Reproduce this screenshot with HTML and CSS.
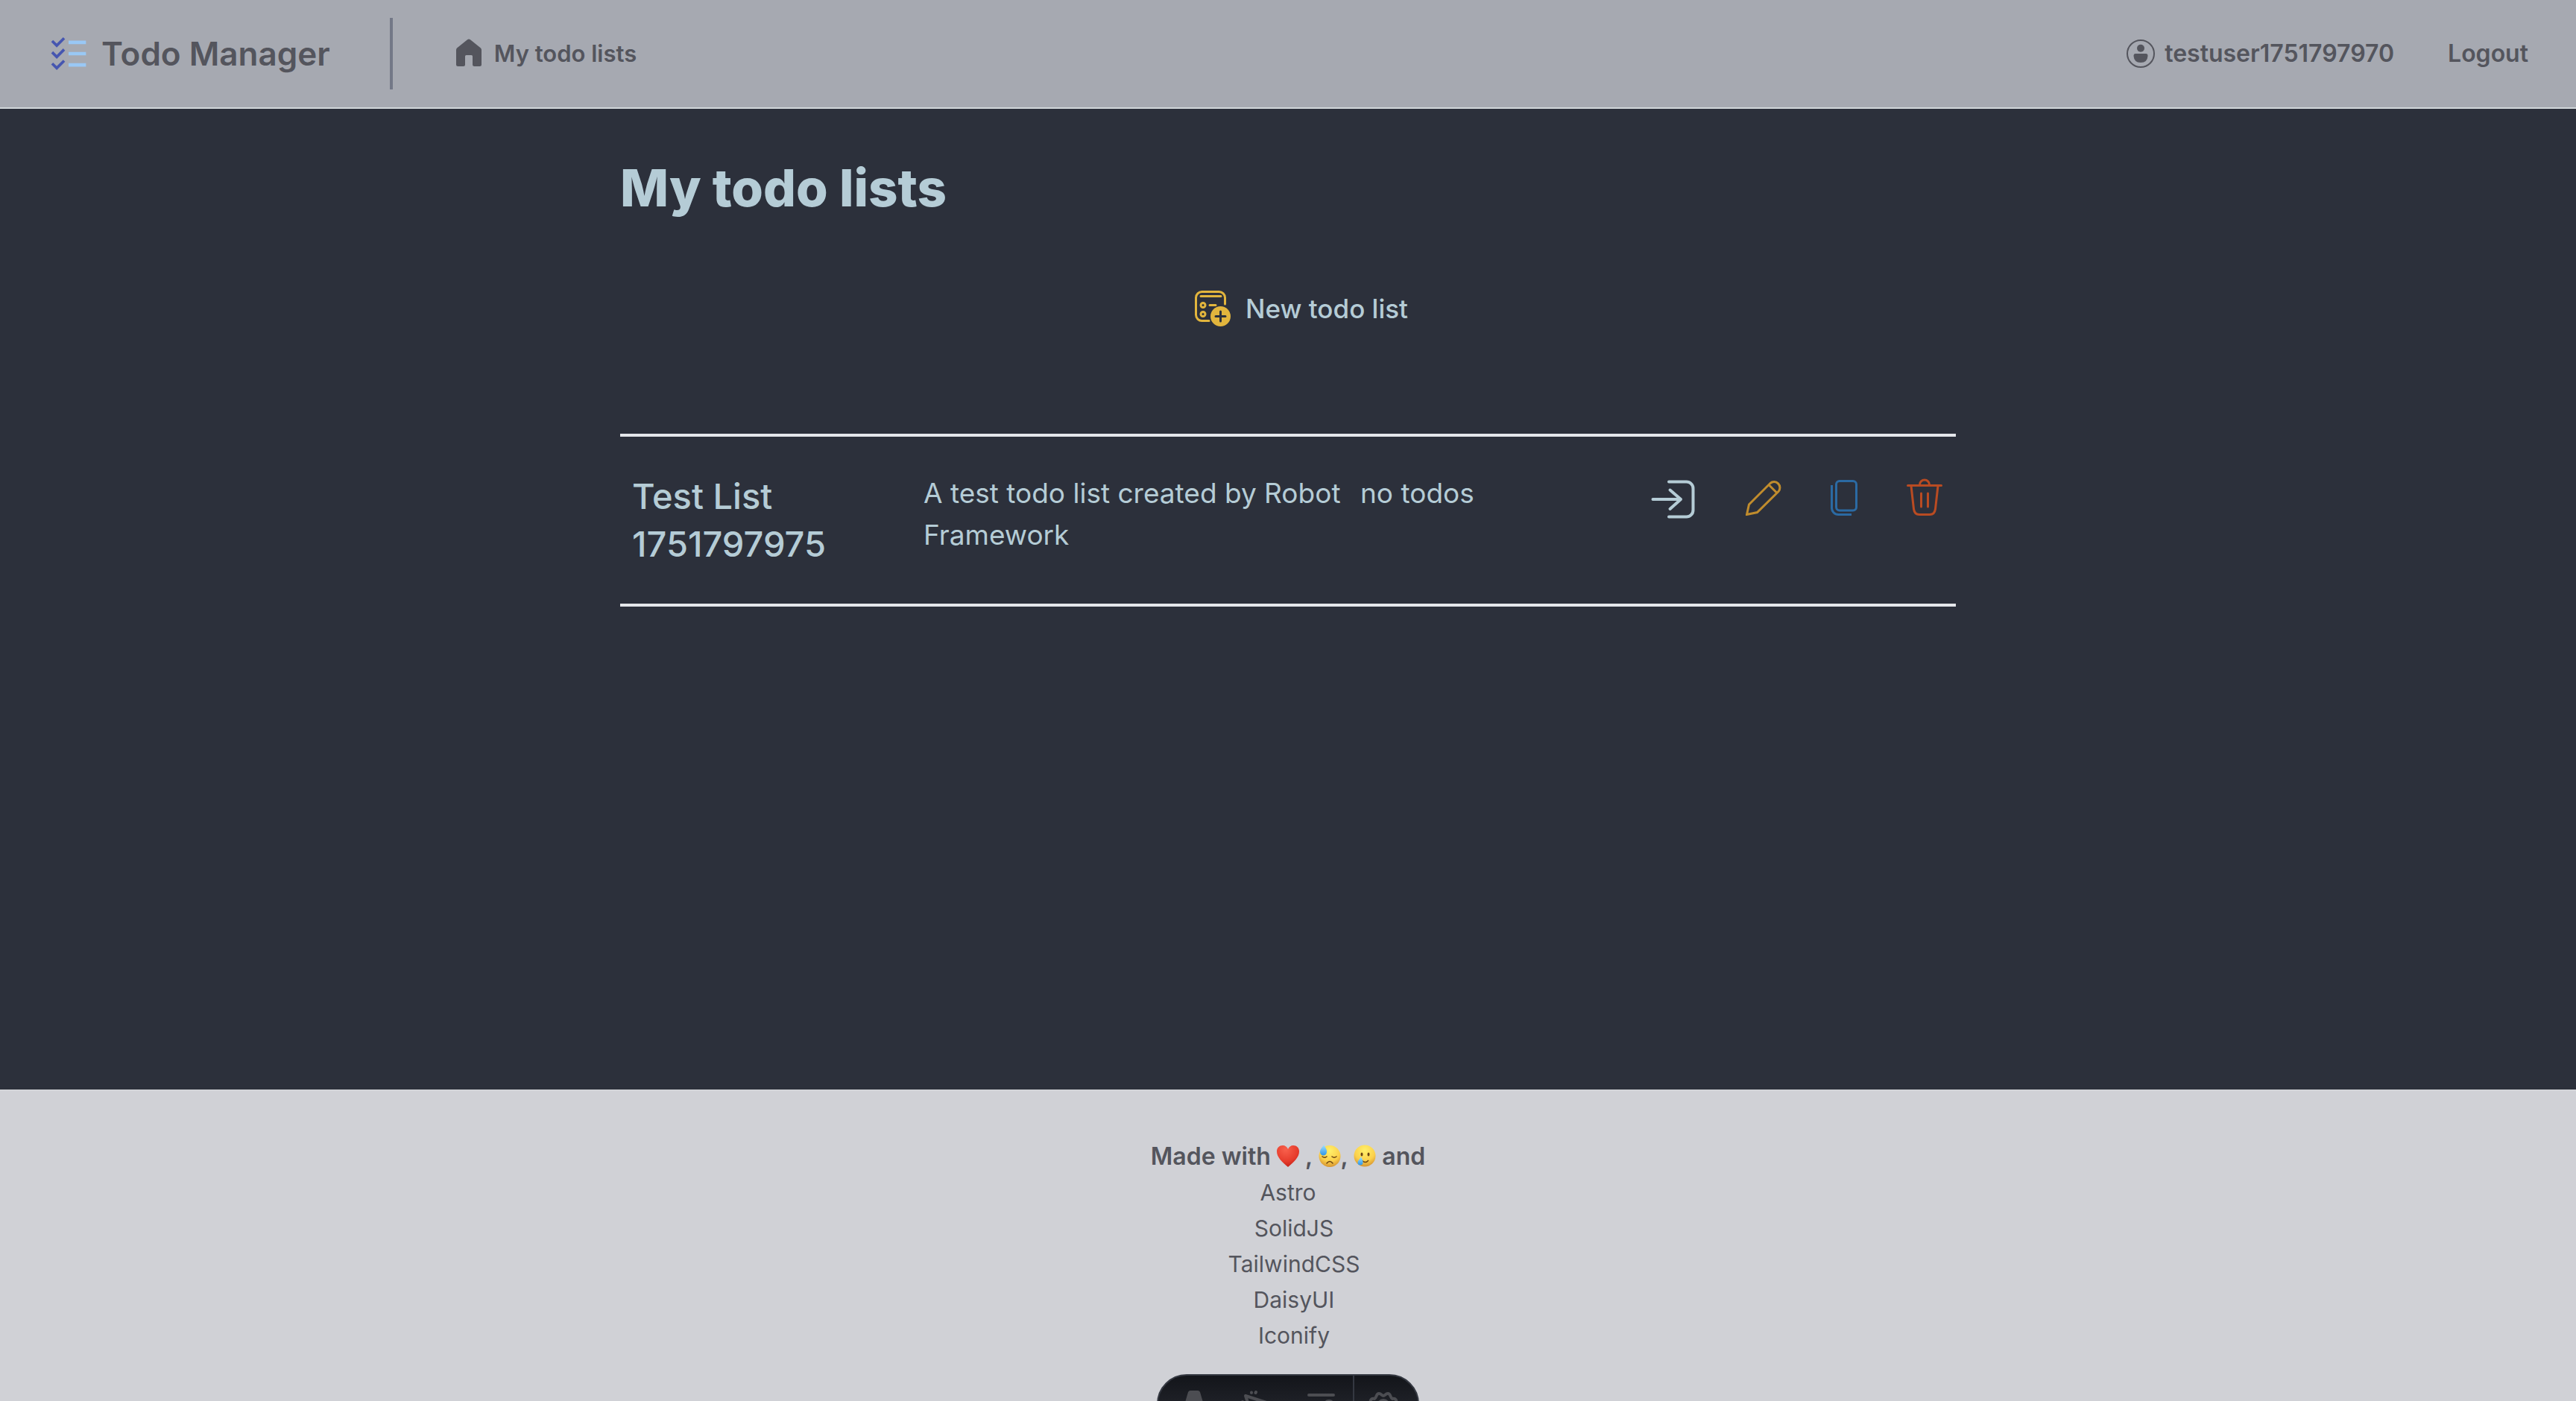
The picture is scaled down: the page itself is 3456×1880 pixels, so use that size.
FILE: index.html
```html
<!DOCTYPE html>
<html lang="en">
<head>
<meta charset="utf-8">
<title>My todo lists</title>
<link rel="stylesheet" href="styles.css">
</head>
<body>
<header class="navbar">
  <a class="brand" href="#">
    <svg class="brand-icon" viewBox="0 0 48 48" aria-hidden="true"><path fill="#4656b0" d="m17.8 18.1l-7.4 7.3l-4.2-4.1L4 23.5l6.4 6.4l9.6-9.6zm0-13l-7.4 7.3l-4.2-4.1L4 10.5l6.4 6.4L20 7.3zm0 26l-7.4 7.3l-4.2-4.1L4 36.5l6.4 6.4l9.6-9.6z"/><path fill="#99c8f5" d="M24 22h20v4H24zm0-13h20v4H24zm0 26h20v4H24z"/></svg>
    <span>Todo Manager</span>
  </a>
  <nav class="nav-main">
    <a class="nav-link" href="#">
      <svg class="nav-icon" viewBox="0 0 40 40" aria-hidden="true"><path fill="currentColor" d="M16 1.200Q18 -.200 20 1.200L34 12.500Q35 13.500 35 15V34.500Q35 37 32.500 37H25.500Q23 37 23 34.500V23.500Q23 22 21.500 22H14.500Q13 22 13 23.500V34.500Q13 37 10.500 37H3.500Q1 37 1 34.500V15Q1 13.500 2 12.500Z"/></svg>
      <span>My todo lists</span>
    </a>
  </nav>
  <nav class="nav-user">
    <a class="nav-link" href="#">
      <svg class="nav-icon" viewBox="0 0 40 40" aria-hidden="true"><circle cx="20" cy="20" r="18" fill="none" stroke="currentColor" stroke-width="2"/><circle cx="20" cy="12.700" r="5" fill="currentColor"/><path fill="currentColor" d="M13 20H27Q29.500 20 29.500 23Q29 32 20 32Q11 32 10.500 23Q10.500 20 13 20Z"/></svg>
      <span>testuser1751797970</span>
    </a>
    <a class="nav-link" href="#">Logout</a>
  </nav>
</header>
<main class="content">
  <h1 class="page-title">My todo lists</h1>
  <button class="new-list" type="button">
    <svg class="new-icon" viewBox="0 0 48 48" aria-hidden="true"><g fill="none" stroke="currentColor" stroke-width="3" stroke-linecap="round"><path d="M19 40.500H10A8 8 0 0 1 1.500 32.500V9.500A8 8 0 0 1 9.500 1.500H32.500A8 8 0 0 1 40.500 9.500V18"/><path d="M8 7.500H35M20 19.500H28"/><circle cx="11" cy="19.500" r="3"/><circle cx="11" cy="31.500" r="3"/></g><circle cx="34.500" cy="34.500" r="13.500" fill="currentColor"/><path d="M34.500 28V41M28 34.500H41" stroke="#2c303b" stroke-width="3" stroke-linecap="round"/></svg>
    <span>New todo list</span>
  </button>
  <ul class="lists">
    <li class="list-row">
      <h2 class="list-name">Test List 1751797975</h2>
      <p class="list-text">A test todo list created by Robot Framework</p>
      <p class="list-text">no todos</p>
      <div class="actions">
        <button class="action open" type="button" aria-label="Open"><svg viewBox="0 0 62 56"><g fill="none" stroke="currentColor" stroke-width="4" stroke-linecap="round" stroke-linejoin="round"><path d="M25 4.500H48A9 9 0 0 1 57.500 14V42A9 9 0 0 1 48 51.500H25"/><path d="M3.500 28H41M26.500 15.500L41 28L26.500 41"/></g></svg></button>
        <button class="action edit" type="button" aria-label="Edit"><svg viewBox="0 -2 48 50"><path fill="none" stroke="currentColor" stroke-width="3" d="M1.500 46.500L4.500 33L33 4.500A7.800 7.800 0 0 1 44 15.500L15.500 43.500ZM31 6.500L42 17.500"/></svg></button>
        <button class="action copy" type="button" aria-label="Copy"><svg viewBox="0 -2 36 50"><g fill="none" stroke="currentColor" stroke-width="3"><rect x="7.500" y="1.500" width="27" height="39.500" rx="4.500"/><path d="M1.500 7V37A9 9 0 0 0 10.500 46.500H28"/></g></svg></button>
        <button class="action delete" type="button" aria-label="Delete"><svg viewBox="0 0 48 50"><g fill="none" stroke="currentColor" stroke-width="3" stroke-linecap="round"><path d="M1.500 9.500H46.500M17.500 8.500A6.500 6.500 0 0 1 30.500 8.500M6 10L9.500 41Q10.500 48.500 17 48.500H31Q37.500 48.500 38.500 41L42 10M19.500 20V38M28.500 20V38"/></g></svg></button>
      </div>
    </li>
  </ul>
</main>
<footer class="footer">
  <p class="made">Made with
    <svg class="emoji" viewBox="0 0 30 30" role="img" aria-label="love"><defs><radialGradient id="h" cx=".4" cy=".2" r=".9"><stop offset="0" stop-color="#f8604c"/><stop offset=".6" stop-color="#e63c2c"/><stop offset="1" stop-color="#b91c14"/></radialGradient><radialGradient id="f" cx=".5" cy=".25" r=".8"><stop offset="0" stop-color="#fff06a"/><stop offset=".6" stop-color="#fbd04b"/><stop offset="1" stop-color="#d08a2c"/></radialGradient><linearGradient id="t" x2="0" y2="1"><stop offset="0" stop-color="#a5e2ff"/><stop offset="1" stop-color="#2d96e8"/></linearGradient></defs><path fill="url(#h)" d="M15 30C7 23 0 17 0 9C0 4 3.500 1 8 1C11 1 14 3 15 6C16 3 19 1 22 1C26.500 1 30 4 30 9C30 17 23 23 15 30Z"/></svg> ,
    <svg class="emoji" viewBox="0 0 30 30" role="img" aria-label="sweat"><circle cx="15" cy="15.500" r="14.500" fill="url(#f)"/><g fill="none" stroke="#6b4413" stroke-width="1.500" stroke-linecap="round"><path d="M5 16Q8 18.500 11 16M18 16Q21 18.500 24 16M11 25Q15 20 19 25"/></g><path fill="url(#t)" d="M7 0C9 4 11.500 6 11 10A4.500 4.500 0 0 1 2 10C2 6 5 4 7 0Z"/></svg>,
    <svg class="emoji" viewBox="0 0 30 30" role="img" aria-label="tears"><circle cx="15" cy="15" r="14.500" fill="url(#f)"/><ellipse cx="11" cy="13" rx="1.500" ry="2.500" fill="#6b4413"/><ellipse cx="20" cy="13" rx="1.500" ry="2.500" fill="#6b4413"/><path d="M11 21Q16 26 20 21" fill="none" stroke="#6b4413" stroke-width="1.500"/><path fill="url(#t)" d="M10 16C11 19 13 21 12.500 24A3.500 3.500 0 0 1 5.500 24C5.500 21 9 19 10 16Z"/></svg>
    and</p>
  <ul class="tech">
    <li><a href="#">Astro</a></li>
    <li><a href="#">SolidJS</a></li>
    <li><a href="#">TailwindCSS</a></li>
    <li><a href="#">DaisyUI</a></li>
    <li><a href="#">Iconify</a></li>
  </ul>
</footer>
<div class="devbar">
  <button class="tool" type="button" aria-label="Menu"><svg viewBox="0 0 40 40"><path fill="currentColor" d="M19 2H29Q31 2 32 4L39 28Q34 25 24 25Q14 25 9 28L16 4Q17 2 19 2Z"/></svg></button>
  <button class="tool" type="button" aria-label="Inspect"><svg viewBox="0 0 40 40"><g fill="none" stroke="currentColor" stroke-width="4" stroke-linecap="round" stroke-linejoin="round"><path d="M6 9L15 36L21 26L34 18ZM14 5V4.500M19.500 5L20 4M2 17L3 18"/></g></svg></button>
  <button class="tool" type="button" aria-label="Audit"><svg viewBox="0 0 40 40"><g fill="none" stroke="currentColor" stroke-width="4" stroke-linecap="round"><path d="M4 8H37M4 20H17"/><circle cx="31" cy="22" r="6"/></g></svg></button>
  <button class="tool settings" type="button" aria-label="Settings"><svg viewBox="0 0 40 40"><g fill="none" stroke="currentColor" stroke-width="4" stroke-linejoin="round"><path d="M4 19C1 15 4 12 8 13C11 12 10 6 14 6C17 6 18 9 20 9C22 9 23 6 26 6C30 6 29 12 32 13C36 12 39 15 36 19Q33 22 36 25C39 29 36 32 32 31Q30 38 26 38Q22 36 20 35Q18 36 14 38Q10 38 8 31C4 32 1 29 4 25Q7 22 4 19Z"/><circle cx="20" cy="22" r="7"/></g></svg></button>
</div>
</body>
</html>
```
FILE: styles.css
```css
* { box-sizing: border-box; }
body {
  margin: 0;
  min-height: 100vh;
  display: flex;
  flex-direction: column;
  background: #2c303b;
  color: #b5ccd6;
  font-family: Inter, sans-serif;
  font-size: 31px;
  line-height: 48px;
}
h1, h2, p, ul { margin: 0; padding: 0; }
ul { list-style: none; }
a { color: inherit; text-decoration: none; }
button { border: 0; padding: 0; background: none; color: inherit; font: inherit; }
svg { display: block; }

.navbar {
  display: flex;
  align-items: center;
  padding: 24px 64px;
  background: #a6a9b1;
  border-bottom: 2px solid #d2d7da;
  color: #54555d;
  font-weight: 600;
}
.brand { display: flex; align-items: center; gap: 16px; font-size: 44px; }
.brand-icon { width: 56px; height: 56px; }
.nav-main {
  display: flex;
  align-items: center;
  height: 96px;
  margin-left: 80px;
  padding-left: 84px;
  border-left: 4px solid #737887;
}
.nav-user { display: flex; gap: 72px; margin-left: auto; font-size: 32px; }
.nav-link { display: flex; align-items: center; gap: 12px; }
.nav-icon { width: 40px; height: 40px; }

.content {
  flex: 1;
  width: 100%;
  max-width: 1792px;
  margin: 0 auto;
  padding-top: 64px;
}
.page-title { font-size: 69px; font-weight: 800; line-height: 84px; }
.new-list {
  display: flex;
  align-items: center;
  gap: 20px;
  margin: 96px auto 0;
  padding-left: 36px;
  font-size: 35px;
  font-weight: 500;
}
.new-icon { width: 48px; height: 48px; color: #e2b53d; }
.lists { margin-top: 144px; border-bottom: 4px solid #e5e7eb; }
.list-row {
  display: grid;
  grid-template-columns: 375px 570px 1fr auto;
  column-gap: 16px;
  padding: 48px 18px 48px 16px;
  border-top: 4px solid #e5e7eb;
}
.list-name { font-size: 47px; font-weight: 500; line-height: 64px; }
.list-text { font-size: 37px; line-height: 56px; }
.actions { display: flex; align-items: flex-start; padding-top: 8px; gap: 66px; }
.action svg { width: 48px; height: 50px; }
.open svg { width: 62px; height: 56px; }
.copy svg { width: 36px; }
.edit { color: #c08c2d; }
.copy { color: #2b6aa3; }
.delete { color: #b94b22; }

.footer {
  padding: 64px;
  background: #d0d1d6;
  border-top: 2px solid #d3d4d8;
  color: #54555d;
  text-align: center;
}
.made { font-size: 32px; font-weight: 600; }
.emoji { display: inline-block; width: 30px; height: 30px; vertical-align: -3px; }
.tech { font-size: 30px; }
.tech li + li { padding-left: 16px; }

.devbar {
  position: fixed;
  bottom: -44px;
  left: 50%;
  width: 352px;
  height: 80px;
  margin-left: -176px;
  display: flex;
  border: 2px solid #343841;
  border-radius: 40px;
  background: linear-gradient(#13151a, #2b2d35);
  color: #4c4d52;
  overflow: hidden;
}
.tool { flex: none; width: 25%; display: flex; justify-content: center; padding-top: 18px; }
.tool svg { width: 40px; height: 40px; }
.settings { padding-right: 8px; border-left: 2px solid #343841; }
```
